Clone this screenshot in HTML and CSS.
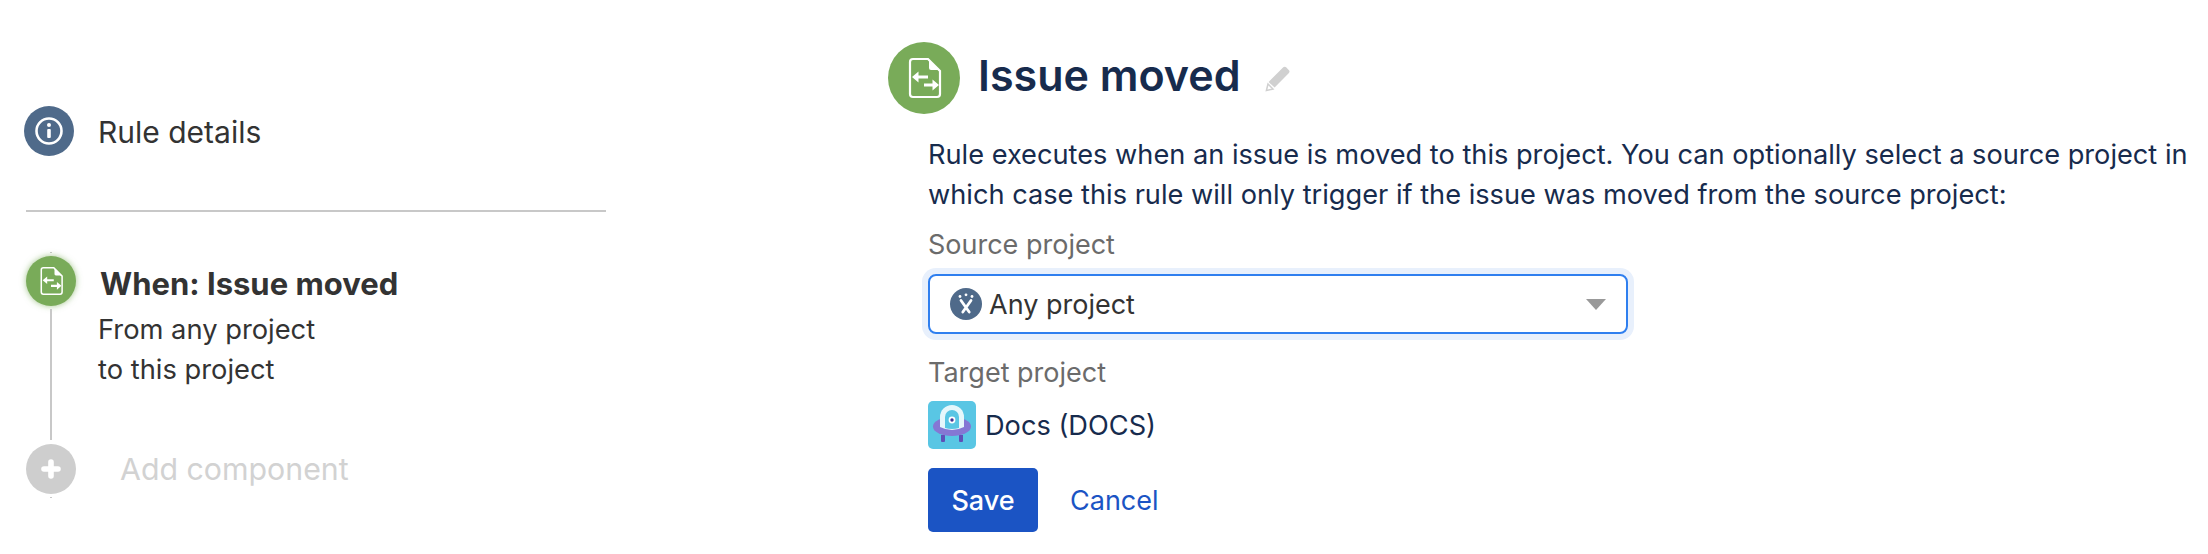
FILE: index.html
```html
<!DOCTYPE html>
<html>
<head>
  <meta charset="UTF-8">
  <title>Issue moved</title>
  <link rel="stylesheet" href="styles.css">
</head>
<body>
  <svg class="defs" width="0" height="0">
    <symbol id="moved" viewBox="0 0 72 72">
      <path d="M25 17h15l12 12v23a3 3 0 0 1-3 3H25a3 3 0 0 1-3-3V20a3 3 0 0 1 3-3z" fill="none" stroke="#fff" stroke-width="2.2"/>
      <path d="M41 18v8a2 2 0 0 0 2 2h8z" fill="#fff"/>
      <path d="M24 35l6.5-5.5v4h9.5v3h-9.5v4z" fill="#fff"/>
      <path d="M51 43l-6.5-5.5v4H36v3h8.500v4z" fill="#fff"/>
    </symbol>
  </svg>

  <div class="sidebar">
    <div class="details">
      <span class="dot dot-blue">
        <svg width="50" height="50" viewBox="0 0 50 50">
          <circle cx="25" cy="25" r="12.5" fill="none" stroke="#fff" stroke-width="2.6"/>
          <circle cx="25" cy="19" r="2" fill="#fff"/>
          <rect x="23.2" y="23" width="3.6" height="9" rx="1" fill="#fff"/>
        </svg>
      </span>
      <span class="details-text">Rule details</span>
    </div>
    <div class="divider"></div>

    <div class="stub stub-top"></div>
    <div class="step">
      <div class="rail">
        <span class="dot dot-green">
          <svg width="50" height="50"><use href="#moved"/></svg>
        </span>
        <div class="rail-line"></div>
      </div>
      <div class="step-text">
        <div class="step-title">When: Issue moved</div>
        <div>From any project</div>
        <div>to this project</div>
      </div>
    </div>
    <div class="add">
      <span class="dot dot-grey">
        <svg width="50" height="50" viewBox="0 0 50 50">
          <path d="M25 18v14M18 25h14" stroke="#fff" stroke-width="5.6" stroke-linecap="round"/>
        </svg>
      </span>
      <span>Add component</span>
    </div>
    <div class="stub stub-bottom"></div>
  </div>

  <div class="main">
    <div class="head">
      <span class="head-icon">
        <svg width="72" height="72"><use href="#moved"/></svg>
      </span>
      <h1>Issue moved</h1>
      <svg class="pencil" width="26" height="27" viewBox="0 0 26 27">
        <path d="M18 2.5a2.4 2.4 0 0 1 3.4 0l2.3 2.4a2.4 2.4 0 0 1 0 3.4L9.6 22.6 3.6 17z" fill="#d0d0d0"/>
        <path d="M3 19l-1.6 6.6 6.6-1.6z" fill="none" stroke="#d0d0d0" stroke-width="1.5"/>
      </svg>
    </div>

    <div class="form">
      <p class="intro">Rule executes when an issue is moved to this project. You can optionally select a source project in which case this rule will only trigger if the issue was moved from the source project:</p>
      <div class="label label-source">Source project</div>
      <div class="select">
        <svg width="32" height="32" viewBox="0 0 32 32">
          <circle cx="16" cy="16" r="16" fill="#4f6a8a"/>
          <circle cx="10" cy="8.5" r="1.4" fill="#fff"/>
          <circle cx="16" cy="6.8" r="1.4" fill="#fff"/>
          <circle cx="22" cy="8.5" r="1.4" fill="#fff"/>
          <path d="M11 12.5l8.2 11.5M21 12.5l-8.2 11.5" stroke="#fff" stroke-width="2.8" stroke-linecap="round"/>
        </svg>
        <span class="select-value">Any project</span>
        <span class="caret"></span>
      </div>
      <div class="label label-target">Target project</div>
      <div class="target">
        <svg class="avatar" width="48" height="48" viewBox="0 0 48 48">
          <rect width="48" height="48" rx="5" fill="#59c6e4"/>
          <path d="M13 34h4v6a1 1 0 0 1-1 1h-2a1 1 0 0 1-1-1zM31 34h4v6a1 1 0 0 1-1 1h-2a1 1 0 0 1-1-1z" fill="#5e50b8"/>
          <ellipse cx="24" cy="25.5" rx="19" ry="9.5" fill="#8577d4"/>
          <path d="M12 26V16a12 12 0 0 1 24 0v10q-12 6-24 0z" fill="#e6f7fb"/>
          <path d="M17 27V16a7 7 0 0 1 14 0v11q-7 2-14 0z" fill="#59c6e4"/>
          <circle cx="24" cy="19" r="3.4" fill="#fff"/>
          <circle cx="24" cy="19" r="1.7" fill="#403294"/>
        </svg>
        <span>Docs (DOCS)</span>
      </div>
      <div class="actions">
        <button class="save">Save</button>
        <a class="cancel" href="#">Cancel</a>
      </div>
    </div>
  </div>
</body>
</html>
```

FILE: styles.css
```css
body {
  margin: 0;
  background-color: #fff;
  font-family: Inter, "Liberation Sans", sans-serif;
  display: flex;
  color: #333;
}

.defs {
  display: block;
  position: absolute;
}

.dot {
  display: block;
  width: 50px;
  height: 50px;
  border-radius: 50%;
  flex: none;
}

.dot svg {
  display: block;
}

.dot-blue {
  background-color: #4f6a8a;
}

.dot-green {
  background-color: #79ab59;
  box-shadow: 0 0 6px rgba(121, 171, 89, 0.7);
}

.dot-grey {
  background-color: #cecece;
}

/* left column */
.sidebar {
  width: 888px;
  flex: none;
  box-sizing: border-box;
  padding: 106px 0 0 24px;
}

.details {
  display: flex;
  align-items: center;
  gap: 24px;
  font-size: 30px;
}

.details-text {
  padding-top: 2px;
}

.divider {
  width: 580px;
  height: 2px;
  margin: 54px 0 0 2px;
  background-color: #c8c8c8;
}

.stub {
  width: 2px;
  height: 1px;
  margin-left: 26px;
  background-color: #c8c8c8;
}

.stub-top {
  margin-top: 40px;
  margin-bottom: 3px;
}

.stub-bottom {
  margin-top: 3px;
}

.step {
  display: flex;
  margin-left: 2px;
  height: 184px;
}

.rail {
  width: 50px;
  display: flex;
  flex-direction: column;
  align-items: center;
}

.rail-line {
  flex: 1;
  width: 2px;
  margin-top: 3px;
  background-color: #c8c8c8;
}

.step-text {
  margin: 8px 0 0 22px;
  font-size: 27.3px;
  line-height: 40px;
}

.step-title {
  margin: 0 0 6px 2px;
  font-size: 31px;
  font-weight: 700;
}

.add {
  display: flex;
  align-items: center;
  gap: 44px;
  margin: 4px 0 0 2px;
  font-size: 30.3px;
  color: #d2d2d2;
}

/* right column */
.main {
  flex: 1;
  padding-top: 42px;
}

.head {
  display: flex;
  align-items: center;
}

.head-icon {
  display: block;
  width: 72px;
  height: 72px;
  border-radius: 50%;
  background-color: #79ab59;
}

.head-icon svg {
  display: block;
}

h1 {
  margin: 0 0 6px 18px;
  font-size: 43px;
  font-weight: 600;
  color: #172b4d;
}

.pencil {
  margin-left: 24px;
}

.form {
  padding-left: 40px;
}

.intro {
  margin: 21px 0 0;
  font-size: 27.2px;
  line-height: 40px;
  color: #172b4d;
}

.label {
  font-size: 27px;
  line-height: 36px;
  color: #6b6b6b;
}

.label-source {
  margin-top: 12px;
}

.label-target {
  margin-top: 21px;
}

.select {
  box-sizing: border-box;
  width: 700px;
  height: 60px;
  margin-top: 11px;
  padding: 0 20px;
  display: flex;
  align-items: center;
  gap: 7px;
  border: 2px solid #2f7fef;
  border-radius: 8px;
  box-shadow: 0 0 0 6px #e8f0fc;
  font-size: 27px;
}

.select-value {
  flex: 1;
}

.caret {
  width: 0;
  height: 0;
  border-left: 10px solid transparent;
  border-right: 10px solid transparent;
  border-top: 11px solid #999;
}

.target {
  display: flex;
  align-items: center;
  gap: 9px;
  margin-top: 10px;
  font-size: 27.2px;
  color: #172b4d;
}

.avatar {
  flex: none;
}

.actions {
  display: flex;
  align-items: center;
  gap: 32px;
  margin-top: 19px;
}

.save {
  width: 110px;
  height: 64px;
  border: none;
  border-radius: 5px;
  background-color: #1b54c4;
  color: #fff;
  font-family: inherit;
  font-size: 27px;
  font-weight: 500;
}

.cancel {
  font-size: 27px;
  color: #1b54c4;
  text-decoration: none;
}
```
